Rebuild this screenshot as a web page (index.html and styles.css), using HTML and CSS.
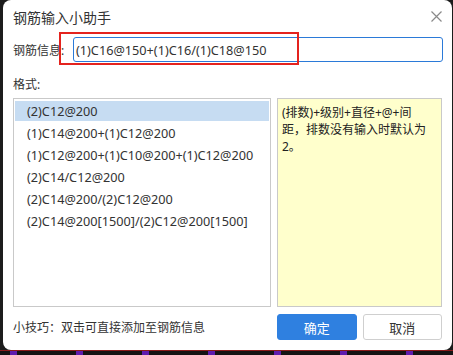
FILE: index.html
```html
<!DOCTYPE html>
<html lang="zh-CN">
<head>
    <meta charset="UTF-8">
    <meta name="viewport" content="width=device-width, initial-scale=1.0">
    <title>钢筋输入小助手</title>
    <link rel="stylesheet" href="styles.css">
</head>
<body>
    <div class="screen">
        <div class="dialog">
            <div class="dialog-header">
                <span class="dialog-title">钢筋输入小助手</span>
                <button class="close-btn" aria-label="关闭">
                    <svg width="11" height="11" viewBox="0 0 11 11">
                        <path d="M0.5 0.5 L10.5 10.5 M10.5 0.5 L0.5 10.5" stroke="#8a8a8a" stroke-width="1.2" fill="none"/>
                    </svg>
                </button>
            </div>

            <div class="info-row">
                <label class="info-label">钢筋信息:</label>
                <input class="info-input" type="text" value="(1)C16@150+(1)C16/(1)C18@150">
            </div>
            <!-- annotation box drawn over the field -->
            <div class="mark"></div>

            <div class="format-label">格式:</div>

            <div class="format-body">
                <ul class="format-list">
                    <li class="selected">(2)C12@200</li>
                    <li>(1)C14@200+(1)C12@200</li>
                    <li>(1)C12@200+(1)C10@200+(1)C12@200</li>
                    <li>(2)C14/C12@200</li>
                    <li>(2)C14@200/(2)C12@200</li>
                    <li>(2)C14@200[1500]/(2)C12@200[1500]</li>
                </ul>
                <div class="format-desc">(排数)+级别+直径+@+间距，排数没有输入时默认为2。</div>
            </div>

            <div class="dialog-footer">
                <span class="tip">小技巧：双击可直接添加至钢筋信息</span>
                <div class="actions">
                    <button class="btn btn-primary">确定</button>
                    <button class="btn">取消</button>
                </div>
            </div>
        </div>
        <div class="canvas-strip"></div>
    </div>
</body>
</html>
```

FILE: styles.css
```css
* {
    margin: 0;
    padding: 0;
    box-sizing: border-box;
    font-family: "Noto Sans", "Noto Sans CJK SC", sans-serif;
}

body {
    background: #1c1c1c;
    width: 453px;
    height: 355px;
    overflow: hidden;
    color: #333;
}

.screen {
    display: flex;
    flex-direction: column;
}

.dialog {
    position: relative;
    margin-left: 3px;
    width: 449px;
    height: 350px;
    background: #fff;
    border-radius: 8px;
    padding: 0 10px 0 10px;
}

.dialog-header {
    height: 34px;
    display: flex;
    align-items: center;
    justify-content: space-between;
}

.dialog-title {
    font-size: 14px;
    color: #333;
}

.close-btn {
    width: 12px;
    height: 12px;
    border: none;
    background: none;
    display: flex;
    align-items: center;
    justify-content: center;
    cursor: pointer;
    margin-top: -1px;
}

.info-row {
    margin-top: 3px;
    height: 25px;
    display: flex;
    align-items: center;
}

.info-label {
    font-size: 12px;
    width: 60px;
}

.info-input {
    flex: 1;
    height: 25px;
    border: 1px solid #2b7ad8;
    border-radius: 3px;
    padding: 0 2px;
    font-size: 12.7px;
    color: #333;
    outline: none;
    margin-right: -1px;
}

.mark {
    position: absolute;
    left: 56px;
    top: 32px;
    width: 240px;
    height: 33px;
    border: 2px solid #e4231e;
    pointer-events: none;
}

.format-label {
    margin-top: 13px;
    height: 20px;
    line-height: 20px;
    font-size: 12px;
}

.format-body {
    margin-top: 3px;
    display: grid;
    grid-template-columns: 258px 165px;
    gap: 6px;
    height: 209px;
}

.format-list {
    list-style: none;
    border: 1px solid #c9c9c9;
    padding: 2px 1px;
}

.format-list li {
    height: 20px;
    line-height: 20px;
    margin-bottom: 2px;
    padding-left: 12px;
    font-size: 12.7px;
    color: #333;
    white-space: nowrap;
}

.format-list li.selected {
    background: #c6dcf2;
}

.format-desc {
    background: #ffffcc;
    border: 1px solid #c9c9c9;
    padding: 5px 10px 0 4px;
    font-size: 12px;
    line-height: 17px;
    color: #222;
}

.dialog-footer {
    margin-top: 7px;
    display: grid;
    grid-template-columns: 258px 165px;
    gap: 6px;
    align-items: center;
}

.tip {
    font-size: 12px;
    color: #333;
}

.actions {
    display: flex;
    gap: 6px;
}

.btn {
    width: 80px;
    height: 26px;
    border: 1px solid #cfcfcf;
    border-radius: 3px;
    background: #fff;
    color: #333;
    font-size: 13px;
    cursor: pointer;
}

.btn-primary {
    background: #2f80e0;
    border-color: #2f80e0;
    color: #fff;
}

.canvas-strip {
    height: 5px;
    border-top: 1px solid #8a1a1a;
    background: repeating-linear-gradient(90deg, #141414 0 10px, #5f1cae 10px 17px, #141414 17px 66px);
}
```
